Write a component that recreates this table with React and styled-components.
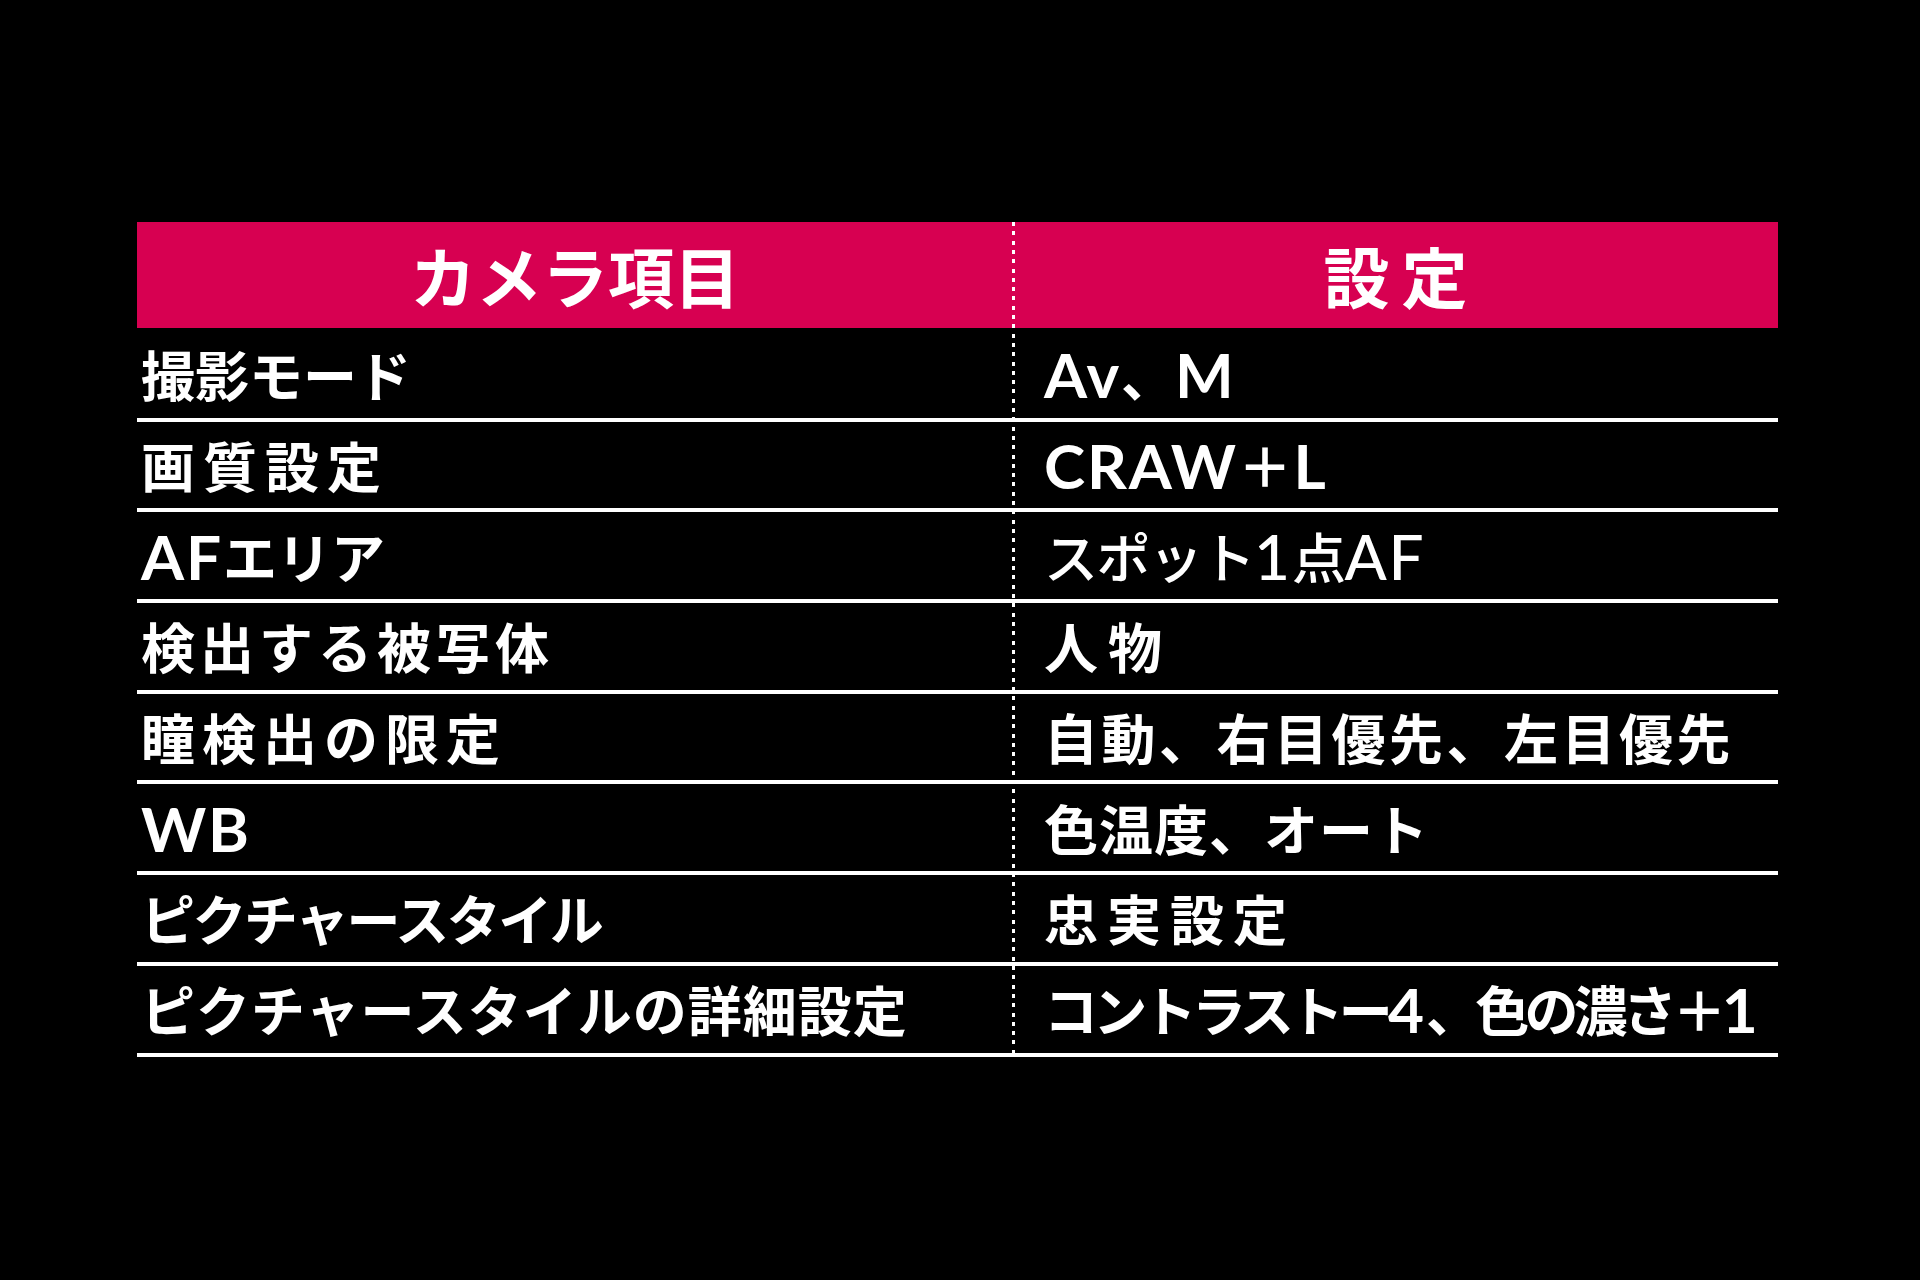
import React from 'react';
import styled, { createGlobalStyle } from 'styled-components';

const GlobalStyle = createGlobalStyle`
  html, body {
    margin: 0;
    padding: 0;
    background: #000;
  }
  body {
    font-family: "Noto Sans CJK JP", "Noto Sans", sans-serif;
    color: #fff;
  }
`;

const Page = styled.div`
  width: 1920px;
  height: 1280px;
  box-sizing: border-box;
  padding: 222px 0 0 137px;
  background: #000;
`;

const Table = styled.div`
  position: relative;
  width: 1641px;

  /* dotted divider between the two columns */
  &::after {
    content: '';
    position: absolute;
    left: 875px;
    top: 0;
    bottom: 0;
    width: 3px;
    background: repeating-linear-gradient(
      to bottom,
      #fff 0,
      #fff 4px,
      transparent 4px,
      transparent 9.3px
    );
  }
`;

const HeaderRow = styled.div`
  display: grid;
  grid-template-columns: 876px 765px;
  height: 106px;
  background: #d70051;
`;

const HeaderCell = styled.div`
  display: flex;
  align-items: center;
  justify-content: center;
  font-size: 66px;
  font-weight: 700;
  line-height: 1;
  padding-bottom: 2px;
  /* trailing letter-spacing pushes the text left, so pad it back */
  padding-left: ${p => p.$ls || 0}px;
  letter-spacing: ${p => p.$ls || 0}px;
`;

const Body = styled.div`
  margin-top: 3px;
`;

const Row = styled.div`
  display: grid;
  grid-template-columns: 876px 765px;
  height: 90.7px;
  box-sizing: border-box;
  border-bottom: 4px solid #fff;
`;

const Cell = styled.div`
  display: flex;
  align-items: center;
  padding-left: ${p => (p.$value ? '31px' : '4px')};
  font-size: 54px;
  font-weight: ${p => (p.$light ? 500 : 700)};
  line-height: 1;
  white-space: nowrap;
  letter-spacing: ${p => p.$ls || 0}px;
`;

const Latin = styled.span`
  font-family: "Lato", "Liberation Sans", sans-serif;
  font-size: 1.15em;
  letter-spacing: 0.03em;
`;

const latinRun = /([A-Za-z0-9]+)/;

const renderText = text =>
  text.split(latinRun).map((part, i) =>
    /^[A-Za-z0-9]+$/.test(part) ? <Latin key={i}>{part}</Latin> : part
  );

const rows = [
  { item: '撮影モード', value: 'Av、M' },
  { item: '画質設定', itemLs: 8, value: 'CRAW＋L', valueLs: 1.5 },
  { item: 'AFエリア', value: 'スポット1点AF', light: true, valueLs: -1.5 },
  { item: '検出する被写体', itemLs: 5, value: '人物', valueLs: 10 },
  { item: '瞳検出の限定', itemLs: 7, value: '自動、右目優先、左目優先', valueLs: 3.5 },
  { item: 'WB', value: '色温度、オート', valueLs: 1 },
  { item: 'ピクチャースタイル', itemLs: -2.5, value: '忠実設定', valueLs: 9 },
  { item: 'ピクチャースタイルの詳細設定', itemLs: 1, value: 'コントラストー4、色の濃さ＋1', valueLs: -4.7 },
];

const App = () => {
  return (
    <Page>
      <GlobalStyle />
      <Table>
        <HeaderRow>
          <HeaderCell>カメラ項目</HeaderCell>
          <HeaderCell $ls={12}>設定</HeaderCell>
        </HeaderRow>
        <Body>
          {rows.map(row => (
            <Row key={row.item}>
              <Cell $ls={row.itemLs}>{renderText(row.item)}</Cell>
              <Cell $value $light={row.light} $ls={row.valueLs}>
                {renderText(row.value)}
              </Cell>
            </Row>
          ))}
        </Body>
      </Table>
    </Page>
  );
};

export default App;
